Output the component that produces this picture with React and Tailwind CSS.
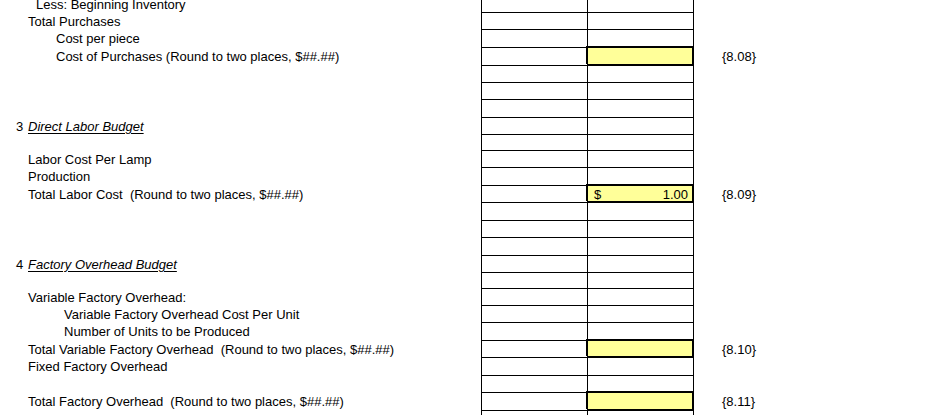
import React from "react";

const H = { 16: "h-[16px]", 17: "h-[17px]", 18: "h-[18px]" };

const rows = [
  { h: 17, label: "Less: Beginning Inventory", pad: "pl-[36px]" },
  { h: 17, label: "Total Purchases", pad: "pl-[28px]" },
  { h: 18, label: "Cost per piece", pad: "pl-[56px]" },
  { h: 18, label: "Cost of Purchases (Round to two places, $##.##)", pad: "pl-[56px]", yellow: true, note: "{8.08}" },
  { h: 17 },
  { h: 17 },
  { h: 18 },
  { h: 17, num: "3", label: "Direct Labor Budget", heading: true },
  { h: 16 },
  { h: 17, label: "Labor Cost Per Lamp", pad: "pl-[28px]" },
  { h: 18, label: "Production", pad: "pl-[28px]" },
  { h: 17, label: "Total Labor Cost  (Round to two places, $##.##)", pad: "pl-[28px]", yellow: true, value: "1.00", note: "{8.09}" },
  { h: 18 },
  { h: 17 },
  { h: 18 },
  { h: 17, num: "4", label: "Factory Overhead Budget", heading: true },
  { h: 16 },
  { h: 17, label: "Variable Factory Overhead:", pad: "pl-[28px]" },
  { h: 17, label: "Variable Factory Overhead Cost Per Unit", pad: "pl-[64px]" },
  { h: 18, label: "Number of Units to be Produced", pad: "pl-[64px]" },
  { h: 17, label: "Total Variable Factory Overhead  (Round to two places, $##.##)", pad: "pl-[28px]", yellow: true, note: "{8.10}" },
  { h: 18, label: "Fixed Factory Overhead", pad: "pl-[28px]" },
  { h: 17 },
  { h: 18, label: "Total Factory Overhead  (Round to two places, $##.##)", pad: "pl-[28px]", yellow: true, note: "{8.11}" },
  { h: 17 },
];

const Row = ({ row }) => (
  <div className={`flex ${H[row.h]}`}>
    <div className={`w-[481px] shrink-0 flex items-center pt-[2px] whitespace-pre ${row.pad || ""}`}>
      {row.heading ? (
        <>
          <span className="w-[28px] pl-[16px] shrink-0">{row.num}</span>
          <span className="italic underline underline-offset-2">{row.label}</span>
        </>
      ) : (
        row.label
      )}
    </div>
    <div className="w-[106px] shrink-0 border-l border-t border-black" />
    <div
      className={`w-[107px] shrink-0 border-l border-r border-t border-black flex items-center justify-between pt-[2px] pl-[6px] pr-[5px] ${
        row.yellow ? "bg-[#ffff99] shadow-[inset_-1px_-1px_0_#000,-1px_-1px_0_#000]" : ""
      }`}
    >
      {row.value && (
        <>
          <span>$</span>
          <span>{row.value}</span>
        </>
      )}
    </div>
    <div className="flex items-center pt-[2px] pl-[28px]">{row.note}</div>
  </div>
);

export default function App() {
  return (
    <div className="h-[415px] w-[928px] overflow-hidden bg-white text-black text-[13px] font-['Liberation_Sans',Arial,sans-serif]">
      <div className="-mt-[5px] flex flex-col">
        {rows.map((row, i) => (
          <Row key={i} row={row} />
        ))}
      </div>
    </div>
  );
}
